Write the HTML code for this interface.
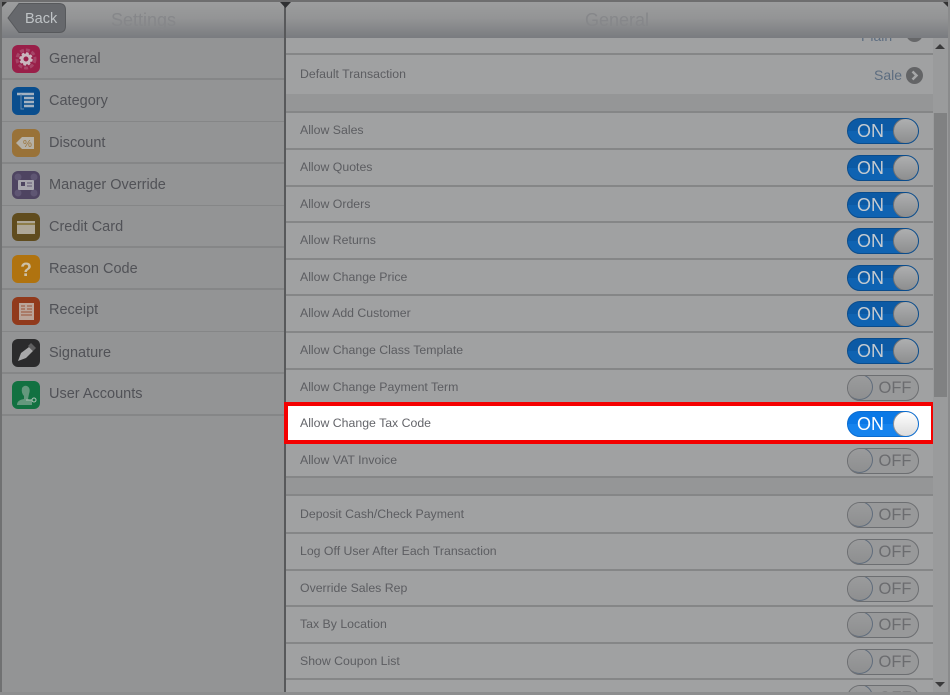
<!DOCTYPE html>
<html><head><meta charset="utf-8"><style>
html,body{margin:0;padding:0;width:950px;height:695px;overflow:hidden;background:#8f9091}
*{box-sizing:border-box}
body{position:relative;font-family:"Liberation Sans",sans-serif}
#w{position:absolute;left:0;top:0;width:950px;height:695px;overflow:hidden;filter:blur(.35px)}
.a{position:absolute}
.hd{position:absolute;top:2px;height:36px;background:linear-gradient(#9c9d9e,#939495 45%,#797b7f)}
.ln{position:absolute;height:2px;background:#858687}
.l{position:absolute;left:49px;font-size:14.5px;line-height:18px;color:#515257;white-space:nowrap}
.r{position:absolute;left:300px;font-size:12.3px;line-height:16px;color:#5c5d61;white-space:nowrap}
.ic{position:absolute;left:12px;width:28px;height:28px;border-radius:6px;overflow:hidden;filter:brightness(.93)}
.ic svg{display:block}
.sw{position:absolute;left:847px;width:72px;height:26px;border-radius:13px;overflow:hidden}
.on{background:linear-gradient(#0c5aa5 0 50%,#0f63b2 50%);border:1px solid #0a4c8c;color:#c6cbd0}
.off{background:#98999a;border:1.5px solid #6c6e71;color:#6b6c6f}
.sw b{position:absolute;font-weight:normal;line-height:24px;top:0}
.on b{left:9px;font-size:18px}.off b{left:30.500px;font-size:16.500px}
.k{position:absolute;width:26px;height:26px;border-radius:50%;background:linear-gradient(#a9aaab,#8e8f90)}
.on .k{right:-1px;top:-1px;background:linear-gradient(#aeafb0,#8d8e8f);border:1.5px solid #6f7174}
.off .k{left:-2px;top:-2px;width:27px;background:linear-gradient(#9b9c9d,#8e8f90);border:1.5px solid #5f6c7c}
.hl.on{background:linear-gradient(#0a78e6 0 50%,#1583ee 50%);border-color:#0a6cd0;color:#fff}
.hl .k{background:linear-gradient(#fff,#dcdcdc);border-color:#8a9098}
</style></head><body><div id="w">

<!-- backgrounds -->
<div class="a" style="left:2px;top:38px;width:282px;height:654px;background:#939495"></div>
<div class="a" style="left:286px;top:38px;width:662px;height:654px;background:#a0a1a2"></div>
<div class="a" style="left:0;top:0;width:950px;height:2px;background:#6e6e6f"></div>
<div class="a" style="left:0;top:0;width:2px;height:695px;background:#707172"></div>
<div class="a" style="left:948px;top:0;width:2px;height:695px;background:#8a8b8c"></div>
<div class="a" style="left:0;top:692px;width:950px;height:3px;background:#8d8e8f"></div>

<!-- Plain row, clipped by header -->
<div class="a" style="left:861px;top:28px;font-size:14px;line-height:16px;color:#5d6d80">Plain</div>
<svg class="a" style="left:906px;top:25px" width="17" height="17"><circle cx="8.500" cy="8.500" r="8.500" fill="#666769"/></svg>

<!-- headers -->
<div class="hd" style="left:2px;width:282px"></div>
<div class="hd" style="left:286px;width:662px"></div>
<div class="a" style="left:284px;top:2px;width:2px;height:690px;background:#58595b"></div>
<div class="a" style="left:2px;top:2px;width:5px;height:5px;background:#333;clip-path:polygon(0 0,100% 0,0 100%)"></div>
<div class="a" style="left:280px;top:2px;width:11px;height:6px;background:#2f3032;clip-path:polygon(0 0,100% 0,50% 100%)"></div>
<div class="a" style="left:943px;top:2px;width:5px;height:5px;background:#333;clip-path:polygon(0 0,100% 0,100% 100%)"></div>
<div class="a" style="left:111px;top:10px;font-size:18px;line-height:20px;color:#86878a">Settings</div>
<div class="a" style="left:585px;top:10px;font-size:18px;line-height:20px;color:#86878a">General</div>
<svg class="a" style="left:6px;top:2px" width="62" height="32"><path d="M13 1.500H53Q59.500 1.500 59.500 8V24Q59.500 30.500 53 30.500H13L2 16Z" fill="#66686c" stroke="#57595c"/></svg>
<div class="a" style="left:25px;top:10px;font-size:14.500px;line-height:18px;color:#bfc3c6">Back</div>

<!-- left list -->
<div class="l" style="top:50px">General</div>
<div class="l" style="top:92px">Category</div>
<div class="l" style="top:134px">Discount</div>
<div class="l" style="top:176px">Manager Override</div>
<div class="l" style="top:218px">Credit Card</div>
<div class="l" style="top:260px">Reason Code</div>
<div class="l" style="top:301px">Receipt</div>
<div class="l" style="top:344px">Signature</div>
<div class="l" style="top:385px">User Accounts</div>
<div class="ln" style="left:2px;width:282px;top:78px"></div>
<div class="ln" style="left:2px;width:282px;top:120.500px;height:1.500px"></div>
<div class="ln" style="left:2px;width:282px;top:162px"></div>
<div class="ln" style="left:2px;width:282px;top:204.500px;height:1.500px"></div>
<div class="ln" style="left:2px;width:282px;top:246px"></div>
<div class="ln" style="left:2px;width:282px;top:288px"></div>
<div class="ln" style="left:2px;width:282px;top:330.500px;height:1.500px"></div>
<div class="ln" style="left:2px;width:282px;top:372px"></div>
<div class="ln" style="left:2px;width:282px;top:414px"></div>

<div class="ic" style="top:45px;background:#a5214f"><svg width="28" height="28"><circle cx="14" cy="14" r="9" fill="none" stroke="#b24a70" stroke-width="3" stroke-dasharray="4 2"/><circle cx="14" cy="14" r="4" fill="none" stroke="#d8c4cc" stroke-width="3"/><circle cx="14" cy="14" r="5.500" fill="none" stroke="#d8c4cc" stroke-width="2.500" stroke-dasharray="2.500 1.800"/></svg></div>
<div class="ic" style="top:87px;background:#0b5499"><svg width="28" height="28"><path d="M5 7H22M12 11H22M12 15H22M12 19H22" stroke="#b0bfd0" stroke-width="2.500"/><path d="M9 7V22H12" stroke="#6d94bb" fill="none"/></svg></div>
<div class="ic" style="top:129px;background:#a47b3c"><svg width="28" height="28"><path d="M4 14L10 8H22V20H10Z" fill="#c4beb2"/><text x="11" y="18" font-family="Liberation Sans" font-size="10" fill="#a47b3c">%</text></svg></div>
<div class="ic" style="top:171px;background:#544968"><svg width="28" height="28"><circle cx="6" cy="6" r="3.500" fill="#665c7c"/><circle cx="22" cy="6" r="3.500" fill="#665c7c"/><circle cx="6" cy="22" r="3.500" fill="#665c7c"/><circle cx="22" cy="22" r="3.500" fill="#665c7c"/><rect x="6" y="9" width="16" height="10" rx="1" fill="#b5b2bb"/><rect x="9" y="11" width="4" height="4" fill="#544968"/><path d="M15 12H20M15 15H20" stroke="#665c7c"/></svg></div>
<div class="ic" style="top:213px;background:#675220"><svg width="28" height="28"><rect x="5" y="8" width="18" height="13" fill="#bbb4a2"/><rect x="5" y="10" width="18" height="2" fill="#98864f"/></svg></div>
<div class="ic" style="top:255px;background:#bd7c10"><svg width="28" height="28"><text x="14" y="21" text-anchor="middle" font-family="Liberation Sans" font-weight="bold" font-size="19" fill="#dccfb5">?</text></svg></div>
<div class="ic" style="top:297px;background:#9c3e1e"><svg width="28" height="28"><rect x="7" y="6" width="15" height="17" fill="#c8b1a6"/><path d="M9 9H13M15 9H20M9 12H13M15 12H20M9 15H20M9 18H20" stroke="#ad6a50" stroke-width="1.300"/></svg></div>
<div class="ic" style="top:339px;background:#2e2e2f"><svg width="28" height="28"><path d="M6 22L9 14L17 8L21 12L14 19Z" fill="#b5b5b6"/><path d="M16 7L19 4L24 9L21 12Z" fill="#666667"/></svg></div>
<div class="ic" style="top:381px;background:#137a46"><svg width="28" height="28"><path d="M5 24Q5 19 12 18V15Q9 12 10 7Q12 4 15 5Q19 7 17 13L16 18L20 20V24Z" fill="#6ca386"/><circle cx="22" cy="19" r="2" fill="none" stroke="#bcd0c4"/><path d="M14 19H20" stroke="#bcd0c4"/></svg></div>

<!-- right list -->
<div class="a" style="left:286px;top:94px;width:647px;height:18px;background:#959697"></div>
<div class="a" style="left:286px;top:477px;width:647px;height:18px;background:#959697"></div>

<div class="ln" style="left:286px;width:647px;top:53px"></div>
<div class="r" style="top:66px">Default Transaction</div>
<div class="a" style="left:874px;top:67px;font-size:14px;line-height:16px;color:#5d6d80">Sale</div>
<svg class="a" style="left:906px;top:67px" width="17" height="17"><circle cx="8.500" cy="8.500" r="8.500" fill="#636466"/><path d="M6.500 4.500L10.500 8.500L6.500 12.500" fill="none" stroke="#a6a7a8" stroke-width="2.500"/></svg>

<div class="ln" style="left:286px;width:647px;top:111px"></div>
<div class="ln" style="left:286px;width:647px;top:148px"></div>
<div class="ln" style="left:286px;width:647px;top:185px"></div>
<div class="ln" style="left:286px;width:647px;top:221px"></div>
<div class="ln" style="left:286px;width:647px;top:258px"></div>
<div class="ln" style="left:286px;width:647px;top:294px"></div>
<div class="ln" style="left:286px;width:647px;top:331px"></div>
<div class="ln" style="left:286px;width:647px;top:368px"></div>
<div class="ln" style="left:286px;width:647px;top:476px"></div>
<div class="ln" style="left:286px;width:647px;top:494px"></div>
<div class="ln" style="left:286px;width:647px;top:532px"></div>
<div class="ln" style="left:286px;width:647px;top:569px"></div>
<div class="ln" style="left:286px;width:647px;top:605px"></div>
<div class="ln" style="left:286px;width:647px;top:642px"></div>
<div class="ln" style="left:286px;width:647px;top:678px"></div>

<div class="r" style="top:122px">Allow Sales</div>
<div class="r" style="top:159px">Allow Quotes</div>
<div class="r" style="top:196px">Allow Orders</div>
<div class="r" style="top:232px">Allow Returns</div>
<div class="r" style="top:269px">Allow Change Price</div>
<div class="r" style="top:305px">Allow Add Customer</div>
<div class="r" style="top:342px">Allow Change Class Template</div>
<div class="r" style="top:379px">Allow Change Payment Term</div>
<div class="r" style="top:452px">Allow VAT Invoice</div>
<div class="r" style="top:506px">Deposit Cash/Check Payment</div>
<div class="r" style="top:543px">Log Off User After Each Transaction</div>
<div class="r" style="top:580px">Override Sales Rep</div>
<div class="r" style="top:616px">Tax By Location</div>
<div class="r" style="top:653px">Show Coupon List</div>

<div class="sw on" style="top:118px"><b>ON</b><div class="k"></div></div>
<div class="sw on" style="top:155px"><b>ON</b><div class="k"></div></div>
<div class="sw on" style="top:192px"><b>ON</b><div class="k"></div></div>
<div class="sw on" style="top:228px"><b>ON</b><div class="k"></div></div>
<div class="sw on" style="top:265px"><b>ON</b><div class="k"></div></div>
<div class="sw on" style="top:301px"><b>ON</b><div class="k"></div></div>
<div class="sw on" style="top:338px"><b>ON</b><div class="k"></div></div>
<div class="sw off" style="top:375px"><b>OFF</b><div class="k"></div></div>
<div class="sw off" style="top:448px"><b>OFF</b><div class="k"></div></div>
<div class="sw off" style="top:502px"><b>OFF</b><div class="k"></div></div>
<div class="sw off" style="top:539px"><b>OFF</b><div class="k"></div></div>
<div class="sw off" style="top:576px"><b>OFF</b><div class="k"></div></div>
<div class="sw off" style="top:612px"><b>OFF</b><div class="k"></div></div>
<div class="sw off" style="top:649px"><b>OFF</b><div class="k"></div></div>
<div class="a" style="left:847px;top:685px;width:72px;height:7px;overflow:hidden"><div class="sw off" style="left:0;top:0"><b>OFF</b><div class="k"></div></div></div>

<!-- highlight -->
<div class="a" style="left:284px;top:402px;width:651px;height:42px;background:#fff;border:4px solid #f40000"></div>
<div class="r" style="top:415px;color:#64656a">Allow Change Tax Code</div>
<div class="sw on hl" style="top:411px"><b>ON</b><div class="k"></div></div>

<!-- scrollbar -->
<div class="a" style="left:933px;top:38px;width:15px;height:654px;background:#9a9b9c"></div>
<div class="a" style="left:934px;top:113px;width:13px;height:284px;background:#808182"></div>
<div class="a" style="left:935px;top:44px;width:10px;height:5px;background:#3a3a3b;clip-path:polygon(50% 0,100% 100%,0 100%)"></div>
<div class="a" style="left:935px;top:682px;width:10px;height:5px;background:#3a3a3b;clip-path:polygon(0 0,100% 0,50% 100%)"></div>
</div></body></html>
